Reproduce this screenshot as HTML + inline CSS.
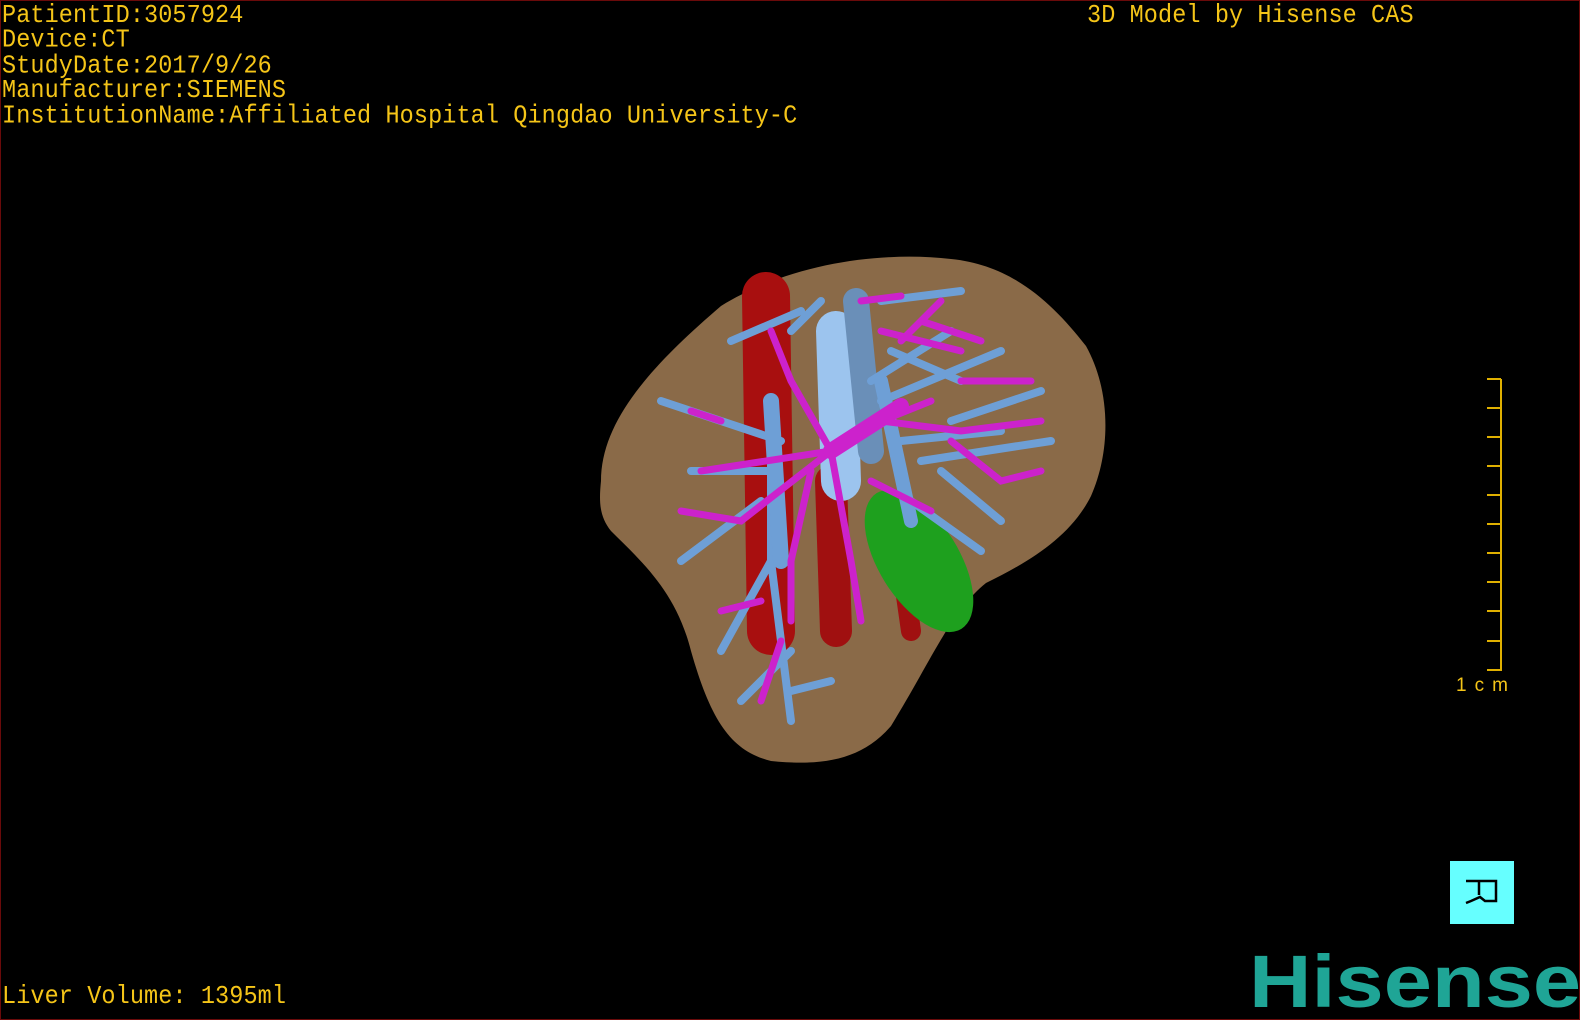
<!DOCTYPE html>
<html><head><meta charset="utf-8"><style>
html,body{margin:0;padding:0;background:#000;}
#f{position:relative;width:1578px;height:1018px;border:1px solid #6a0a0a;background:#000;overflow:hidden;}
.t{position:absolute;left:1px;color:#f5c518;font-family:"Liberation Mono",monospace;font-size:23.5px;line-height:22.4px;white-space:pre;letter-spacing:0.1px;transform:scaleY(1.12);transform-origin:0 0;}
</style></head><body><div id="f">
<div class="t" style="top:3px">PatientID:3057924
Device:CT
StudyDate:2017/9/26
Manufacturer:SIEMENS
InstitutionName:Affiliated Hospital Qingdao University-C</div>
<div class="t" style="left:1086px;top:3px">3D Model by Hisense CAS</div>
<div class="t" style="top:984px">Liver Volume: 1395ml</div>
<svg width="1580" height="1020" style="position:absolute;left:0;top:0">
<path d="M600,480 C600,420 650,365 720,305 C790,262 880,250 950,258 C1010,264 1050,300 1085,345 C1110,390 1110,450 1090,495 C1070,535 1030,560 985,582 C950,610 930,660 890,725 C860,760 820,765 770,760 C730,750 710,720 690,650 C675,590 640,560 610,530 C598,515 598,500 600,480 Z" fill="#8a6a48"/>
<g fill="none" stroke-linecap="round">
<path d="M765,295 L770,630" stroke="#a80f0f" stroke-width="48"/>
<path d="M830,480 L835,630" stroke="#a01010" stroke-width="32"/>
<path d="M900,560 L910,630" stroke="#a01010" stroke-width="20"/>
<path d="M835,330 L840,480" stroke="#9cc4ee" stroke-width="40"/>
<path d="M855,300 L870,450" stroke="#6a8fb8" stroke-width="26"/>
</g>
<ellipse cx="918" cy="560" rx="40" ry="80" transform="rotate(-32 918 560)" fill="#1ea01e"/>
<g fill="none" stroke="#6e9fd6" stroke-linecap="round">
<path d="M770,420 L770,560 L790,720 M770,560 L720,650 M790,650 L740,700 M790,690 L830,680 M770,470 L690,470 M760,500 L680,560 M780,440 L660,400 M730,340 L800,310 M790,330 L820,300 M870,380 L950,330 M880,400 L1000,350 M900,440 L1000,430 M920,460 L1050,440 M910,500 L980,550 M940,470 L1000,520 M880,300 L960,290 M890,350 L960,380 M950,420 L1040,390" stroke-width="8"/>
<path d="M770,400 L780,560" stroke-width="16"/>
<path d="M880,380 L910,520" stroke-width="14"/>
</g>
<g fill="none" stroke="#cc22cc" stroke-linecap="round">
<path d="M830,450 L880,420 L930,400 M830,450 L790,380 L770,330 M830,450 L850,560 L860,620 M830,450 L700,470 M830,450 L740,520 L680,510 M810,470 L790,560 L790,620 M880,420 L960,430 L1040,420 M900,340 L940,300 M920,320 L980,340 M960,380 L1030,380 M950,440 L1000,480 L1040,470 M870,480 L930,510 M760,600 L720,610 M780,640 L760,700 M860,300 L900,295 M880,330 L960,350 M720,420 L690,410" stroke-width="7"/>
<path d="M830,450 L900,405" stroke-width="16"/>
</g>
<g stroke="#e0b000" stroke-width="2">
<line x1="1500" y1="378" x2="1500" y2="670"/>
<line x1="1486" y1="378" x2="1500" y2="378"/><line x1="1486" y1="407" x2="1500" y2="407"/><line x1="1486" y1="436" x2="1500" y2="436"/><line x1="1486" y1="465" x2="1500" y2="465"/><line x1="1486" y1="494" x2="1500" y2="494"/><line x1="1486" y1="523" x2="1500" y2="523"/><line x1="1486" y1="552" x2="1500" y2="552"/><line x1="1486" y1="581" x2="1500" y2="581"/><line x1="1486" y1="610" x2="1500" y2="610"/><line x1="1486" y1="640" x2="1500" y2="640"/><line x1="1486" y1="669" x2="1500" y2="669"/>
</g>
<text x="1455" y="690" fill="#f5c518" font-family="Liberation Sans,sans-serif" font-size="19" textLength="52" lengthAdjust="spacing">1cm</text>
<rect x="1449" y="860" width="64" height="63" fill="#66ffff"/>
<path d="M1465,880 H1495 V900 H1484 L1479,896 L1470,900 L1465,902 M1478,880 V894" fill="none" stroke="#000" stroke-width="2.5"/>
<text x="1248" y="1006" fill="#1fa596" font-family="Liberation Sans,sans-serif" font-weight="bold" font-size="74" textLength="332" lengthAdjust="spacingAndGlyphs">Hisense</text>
</svg>
</div></body></html>
